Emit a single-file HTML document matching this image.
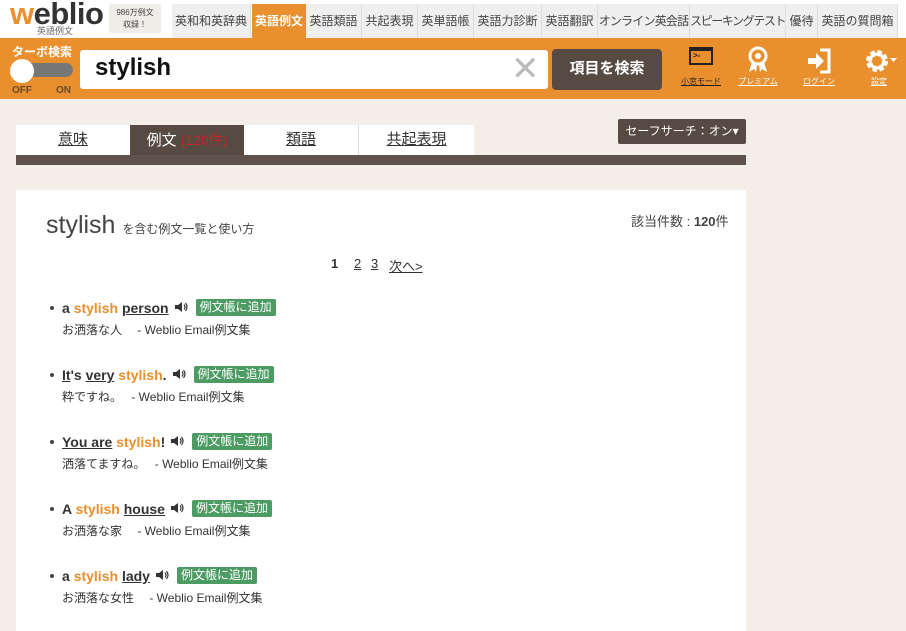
<!DOCTYPE html>
<html><head><meta charset="utf-8"><style>
*{box-sizing:border-box;margin:0;padding:0}
body{width:906px;height:631px;overflow:hidden;background:#f3eee8;font-family:"Liberation Sans","Noto Sans CJK JP",sans-serif;color:#333;position:relative}
.a{position:absolute}
#top{left:0;top:0;width:906px;height:38px;background:#fff}
.nav{top:4px;height:34px;background:#efefef;border-right:1px solid #ddd;font-size:12px;color:#444;line-height:34px;text-align:center;white-space:nowrap;overflow:hidden}
#bar{left:0;top:38px;width:906px;height:61px;background:#e98f2e}
.ic{color:#fff;font-size:8px;text-decoration:underline;text-align:center;width:50px}
.tab{top:125px;height:30px;background:#fff;font-size:15px;text-align:center;line-height:30px;color:#333}
.it{left:48px;font-size:14px;white-space:nowrap}
.it b{font-weight:bold;color:#333}
.o{color:#e98f2e}
.u{text-decoration:underline}
.g{background:#4b9b63;color:#fff;font-size:12px;padding:1px 4px;border-radius:2px;margin-left:8px;font-weight:normal;display:inline-block;line-height:15px;vertical-align:2px}
.sp{display:inline-block;width:14px;margin-left:5px;vertical-align:-1px}
.j{font-size:12px;color:#333;margin-top:5px;padding-left:14px}
.dot{display:inline-block;width:4px;height:4px;background:#444;border-radius:2px;margin:0 8px 3px 2px}
</style></head><body>
<div id="top" class="a"></div>
<div class="a" style="left:10px;top:-4px;font-size:31px;font-weight:bold;color:#333;letter-spacing:-0.5px"><span style="color:#e98f2e">w</span>eblio</div>
<div class="a" style="left:37px;top:24px;font-size:9px;color:#666">英語例文</div>
<div class="a" style="left:109px;top:4px;width:52px;height:29px;background:#f0ede8;border-radius:3px;font-size:8px;text-align:center;line-height:12px;padding-top:3px;color:#444">986万例文<br>収録！</div>
<div class="a nav" style="left:172px;width:79px">英和和英辞典</div>
<div class="a nav" style="left:252px;width:54px;background:#e98f2e;color:#fff;font-weight:bold;border:none">英語例文</div>
<div class="a nav" style="left:306px;width:56px">英語類語</div>
<div class="a nav" style="left:362px;width:56px">共起表現</div>
<div class="a nav" style="left:418px;width:56px">英単語帳</div>
<div class="a nav" style="left:474px;width:68px">英語力診断</div>
<div class="a nav" style="left:542px;width:56px">英語翻訳</div>
<div class="a nav" style="left:598px;width:92px;letter-spacing:-0.8px">オンライン英会話</div>
<div class="a nav" style="left:690px;width:96px;letter-spacing:-1.4px">スピーキングテスト</div>
<div class="a nav" style="left:786px;width:32px">優待</div>
<div class="a nav" style="left:818px;width:80px">英語の質問箱</div>
<div id="bar" class="a"></div>
<div class="a" style="left:12px;top:43px;font-size:12px;color:#fff;font-weight:bold">ターボ検索</div>
<div class="a" style="left:11px;top:63px;width:62px;height:14px;background:#777;border-radius:7px"></div>
<div class="a" style="left:10px;top:59px;width:24px;height:24px;background:#fff;border-radius:12px"></div>
<div class="a" style="left:12px;top:85px;font-size:10px;color:#6b4a2a;font-weight:bold">OFF</div>
<div class="a" style="left:56px;top:85px;font-size:10px;color:#6b4a2a;font-weight:bold">ON</div>
<div class="a" style="left:80px;top:50px;width:468px;height:39px;background:#fff;border-radius:3px"></div>
<div class="a" style="left:95px;top:54px;font-size:24px;font-weight:bold;color:#111">stylish</div>
<div class="a" style="left:511px;top:50px;font-size:34px;color:#bbb;line-height:38px">✕</div>
<div class="a" style="left:552px;top:49px;width:110px;height:41px;background:#574a43;border-radius:4px;color:#fff;font-size:15px;font-weight:bold;text-align:center;line-height:40px">項目を検索</div>
<div class="a" style="left:689px;top:47px;width:24px;height:18px;border:2px solid #222;border-top-width:4px;background:#e98f2e;font-size:8px;color:#222;line-height:10px;padding-left:2px;font-weight:bold">&gt;-</div>
<div class="a ic" style="left:676px;top:76px;color:#222">小窓モード</div>
<svg class="a" style="left:746px;top:46px" width="24" height="28" viewBox="0 0 24 28"><circle cx="12" cy="10" r="8" fill="none" stroke="#fff" stroke-width="3"/><path d="M6 16 L3 26 L8 23 L10 26 L11 19 M18 16 L21 26 L16 23 L14 26 L13 19" fill="#fff"/><circle cx="12" cy="10" r="3" fill="#fff"/></svg>
<div class="a ic" style="left:733px;top:76px">プレミアム</div>
<svg class="a" style="left:806px;top:48px" width="26" height="26" viewBox="0 0 26 26"><path d="M14 2 H23 V24 H14" fill="none" stroke="#fff" stroke-width="3"/><path d="M2 10 H10 V5 L18 13 L10 21 V16 H2Z" fill="#fff"/></svg>
<div class="a ic" style="left:794px;top:76px">ログイン</div>
<svg class="a" style="left:864px;top:48px" width="34" height="26" viewBox="0 0 34 26"><circle cx="13" cy="13" r="8" fill="none" stroke="#fff" stroke-width="6" stroke-dasharray="4 2.3"/><circle cx="13" cy="13" r="7" fill="none" stroke="#fff" stroke-width="3"/><path d="M26 10 H33 L29.5 14Z" fill="#fff"/></svg>
<div class="a ic" style="left:854px;top:76px">設定</div>

<div class="a tab" style="left:16px;width:114px"><u>意味</u></div>
<div class="a tab" style="left:130px;width:114px;background:#574a43;color:#fff">例文 <span style="color:#d0202a;font-size:14px">(120件)</span></div>
<div class="a tab" style="left:244px;width:115px;border-right:1px solid #ddd"><u>類語</u></div>
<div class="a tab" style="left:359px;width:115px"><u>共起表現</u></div>
<div class="a" style="left:16px;top:155px;width:730px;height:10px;background:#5e524b"></div>
<div class="a" style="left:618px;top:119px;width:128px;height:25px;background:#574a43;border-radius:2px;color:#fff;font-size:12px;text-align:center;line-height:25px">セーフサーチ：オン▾</div>

<div class="a" style="left:16px;top:190px;width:730px;height:441px;background:#fff"></div>
<div class="a" style="left:46px;top:211px;font-size:25px;color:#444">stylish <span style="font-size:12px">を含む例文一覧と使い方</span></div>
<div class="a" style="left:631px;top:211px;font-size:13px;color:#444">該当件数 : <b>120</b>件</div>
<div class="a" style="left:331px;top:256px;font-size:13px;color:#333"><b>1</b></div>
<div class="a u" style="left:354px;top:256px;font-size:13px">2</div>
<div class="a u" style="left:371px;top:256px;font-size:13px">3</div>
<div class="a u" style="left:389px;top:256px;font-size:13px">次へ&gt;</div>

<svg width="0" height="0" style="position:absolute"><defs><g id="spk"><path d="M1 5 H4 L8 2 V12 L4 9 H1Z" fill="#333"/><path d="M10 4.5 Q12 7 10 9.5 M11.5 3 Q14.5 7 11.5 11" stroke="#333" stroke-width="1.2" fill="none"/></g></defs></svg>

<div class="a it" style="top:299px"><span class="dot"></span><b>a <span class="o">stylish</span> <span class="u">person</span></b><svg class="sp" width="14" height="14"><use href="#spk"/></svg><span class="g">例文帳に追加</span><div class="j">お洒落な人　 - Weblio Email例文集</div></div>
<div class="a it" style="top:366px"><span class="dot"></span><b><span class="u">It</span>'s <span class="u">very</span> <span class="o">stylish</span>.</b><svg class="sp" width="14" height="14"><use href="#spk"/></svg><span class="g">例文帳に追加</span><div class="j">粋ですね。　 - Weblio Email例文集</div></div>
<div class="a it" style="top:433px"><span class="dot"></span><b><span class="u">You are</span> <span class="o">stylish</span>!</b><svg class="sp" width="14" height="14"><use href="#spk"/></svg><span class="g">例文帳に追加</span><div class="j">洒落てますね。　 - Weblio Email例文集</div></div>
<div class="a it" style="top:500px"><span class="dot"></span><b>A <span class="o">stylish</span> <span class="u">house</span></b><svg class="sp" width="14" height="14"><use href="#spk"/></svg><span class="g">例文帳に追加</span><div class="j">お洒落な家　 - Weblio Email例文集</div></div>
<div class="a it" style="top:567px"><span class="dot"></span><b>a <span class="o">stylish</span> <span class="u">lady</span></b><svg class="sp" width="14" height="14"><use href="#spk"/></svg><span class="g">例文帳に追加</span><div class="j">お洒落な女性　 - Weblio Email例文集</div></div>
</body></html>
